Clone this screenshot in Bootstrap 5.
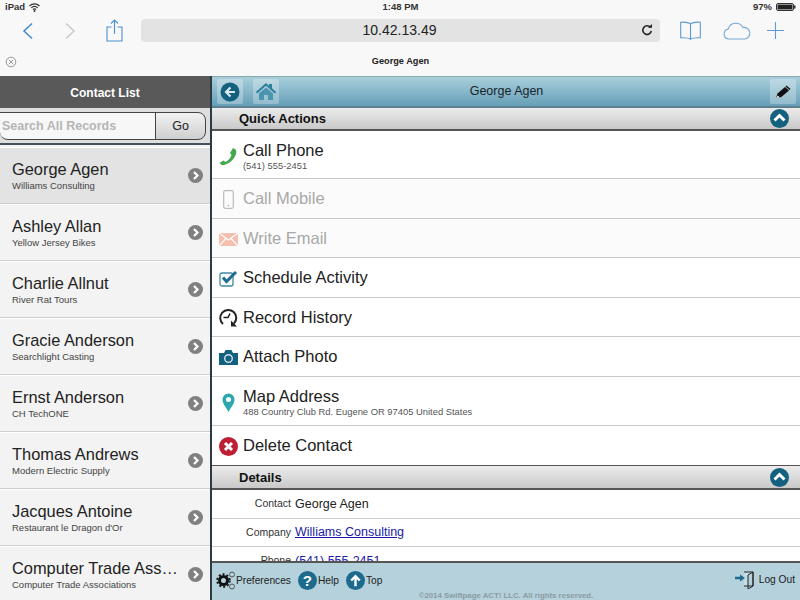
<!DOCTYPE html>
<html lang="en">
<head>
  <meta charset="UTF-8">
  <title>George Agen</title>
  <link href="https://cdn.jsdelivr.net/npm/bootstrap@5.3.0/dist/css/bootstrap.min.css" rel="stylesheet">
  <style>
    html, body { width: 800px; height: 600px; overflow: hidden; }
    body { font-family: "Liberation Sans", Arial, sans-serif; color: #222; background: #fff; }
    .chrome { height: 76px; background: #f8f8f8; }
    .status-bar { height: 14px; font-size: 9.5px; font-weight: 700; color: #333; padding: 0 4px 0 5px; }
    .status-side { width: 200px; }
    .tool-bar { height: 32px; padding-left: 7px; }
    .tool-btn { width: 42px; }
    .share-btn { width: 44px; padding-left: 2px; }
    .url-box { width: 519px; height: 23px; margin-left: 6px; background: #e3e3e3; border-radius: 4px; font-size: 14px; color: #222; padding-right: 7px; }
    .url-text { flex: 1; text-align: center; padding-left: 17px; }
    .book-btn { width: 60px; }
    .cloud-btn { width: 31px; padding-left: 2px; }
    .plus-btn { width: 49px; }
    .tab-bar { height: 30px; font-size: 9.2px; font-weight: 700; color: #222; padding: 2px 0 0 5px; }
    .tab-title { flex: 1; text-align: center; padding-right: 16px; }
    .main-area { height: 524px; }
    .left-pane { width: 212px; background: #f3f3f3; border-right: 2px solid #2c3a44; }
    .list-head { height: 32px; background: #595959; color: #fff; font-size: 12px; font-weight: 700; padding-top: 1px; }
    .search-row { height: 37px; background: #dedede; border-bottom: 2px solid #47525a; padding: 4px 4px 4px 0; }
    .search-box { flex: 1; height: 28px; background: #f7f7f7; border: 1px solid #444; border-left: 0; border-radius: 0 0 0 8px; color: #b5b5b5; font-size: 12.5px; font-weight: 700; padding-left: 2px; }
    .go-btn { width: 51px; height: 28px; border: 1px solid #444; border-radius: 0 8px 8px 0; margin-left: -1px; background: linear-gradient(#f2f2f2, #cfcfcf); font-size: 12.5px; color: #222; }
    .contact-list { padding-top: 2px; }
    .contact-row { height: 57px; padding: 0 7px 0 12px; border-top: 1px solid #fff; border-bottom: 1px solid #cfcfcf; }
    .contact-row.active-row { background: #e3e3e3; }
    .contact-name { font-size: 16.4px; line-height: 20px; color: #222; white-space: nowrap; }
    .contact-org { font-size: 9.5px; line-height: 13px; color: #444; }
    .right-pane { flex: 1; min-width: 0; }
    .detail-head { height: 32px; background: linear-gradient(#a9cfdb, #669fb8); border-top: 1px solid #8aa; border-bottom: 2px solid #5e7f8e; padding: 0 4px 0 5px; font-size: 12.5px; color: #17232b; }
    .head-btn { width: 26px; height: 25px; background: rgba(255,255,255,.28); border-radius: 2px; }
    .home-btn { margin-left: 10px; }
    .head-title { flex: 1; text-align: center; padding-right: 36px; }
    .scroll-area { flex: 1; min-height: 0; overflow: hidden; }
    .section-bar { background: linear-gradient(#ececec, #c9c9c9); font-size: 13px; font-weight: 700; color: #111; padding: 0 11px 0 27px; border-bottom: 2px solid #555; }
    .section-quick { height: 23px; }
    .section-details { height: 25px; border-top: 1px solid #555; padding-top: 1px; }
    .action-row { padding: 1px 0 0 7px; border-bottom: 1px solid #c8c8c8; font-size: 16.5px; line-height: 19px; color: #222; height: 39.5px; }
    .action-row.tall { height: 48px; padding-top: 2px; }
    .action-row.map-row { height: 49px; }
    .action-row.off { color: #a8a8a8; background: #fbfbfb; }
    .action-row.last { border-bottom: 0; }
    .action-ico { width: 19px; margin-right: 5px; flex: none; }
    .action-sub { font-size: 9.4px; line-height: 11px; color: #555; }
    .info-row { height: 28.5px; padding-top: 1px; border-bottom: 1px solid #cfcfcf; }
    .info-label { width: 79px; text-align: right; font-size: 10.5px; color: #333; margin-right: 4px; }
    .info-value { font-size: 12.5px; color: #222; }
    .info-value a { color: #1a1aa6; }
    .page-foot { height: 39px; background: #b4d1dc; border-top: 2px solid #555; padding: 0 5px 0 4px; font-size: 10.2px; color: #222; position: relative; flex: none; }
    .foot-circle { margin-left: 7px; }
    .foot-near { margin-left: 1px; }
    .copy-line { position: absolute; left: 0; right: 0; bottom: 0; line-height: 8px; text-align: center; font-size: 7.8px; font-weight: 700; color: #8b9ba2; }
  </style>
</head>
<body>
  <div class="chrome">
    <div class="status-bar d-flex align-items-center justify-content-between">
      <div class="status-side d-flex align-items-center gap-1">iPad
        <svg width="11" height="9" viewBox="0 0 11 9"><path d="M.5 3a7 7 0 0 1 10 0M2.300 4.800a4.500 4.500 0 0 1 6.400 0M4 6.500a2 2 0 0 1 3 0" fill="none" stroke="#333" stroke-width="1.200"/><circle cx="5.500" cy="8" r="1" fill="#333"/></svg>
      </div>
      <div>1:48 PM</div>
      <div class="status-side d-flex align-items-center justify-content-end gap-1">97%
        <svg width="20" height="8" viewBox="0 0 20 8"><rect x=".5" y=".5" width="17" height="7" rx="1.500" fill="#fff" stroke="#333"/><rect x="1.500" y="1.500" width="15" height="5" fill="#222"/><rect x="18" y="2.500" width="1.500" height="3" fill="#333"/></svg>
      </div>
    </div>
    <div class="tool-bar d-flex align-items-center">
      <div class="tool-btn text-center">
        <svg width="12" height="18" viewBox="0 0 12 18"><path d="M10 1.500 2 9l8 7.500" fill="none" stroke="#3b8ad0" stroke-width="1.500"/></svg>
      </div>
      <div class="tool-btn text-center">
        <svg width="12" height="18" viewBox="0 0 12 18"><path d="M2 1.500 10 9l-8 7.500" fill="none" stroke="#c9c9c9" stroke-width="1.500"/></svg>
      </div>
      <div class="share-btn text-center">
        <svg width="17" height="23" viewBox="0 0 17 23"><path d="M5.500 8H1v14h15V8h-4.500M8.500 15V1M5 4.500l3.500-3.500 3.500 3.500" fill="none" stroke="#4a90cf" stroke-width="1.100"/></svg>
      </div>
      <div class="url-box d-flex align-items-center">
        <div class="url-text">10.42.13.49</div>
        <svg width="12" height="12" viewBox="0 0 12 12"><path d="M9.500 3.500A4.300 4.300 0 1 0 10.300 7" fill="none" stroke="#222" stroke-width="1.600"/><path d="M7 3.800h4V0z" fill="#222"/></svg>
      </div>
      <div class="book-btn text-center">
        <svg width="21" height="19" viewBox="0 0 21 19"><path d="M10.500 3C9 1.500 5 1 .7 1.200v15.600c4.300-.2 8.300.2 9.800 1.500 1.500-1.300 5.500-1.700 9.800-1.500V1.200C16 1 12 1.500 10.500 3zm0 0v15" fill="none" stroke="#5d9ad3" stroke-width="1.100"/></svg>
      </div>
      <div class="cloud-btn text-center">
        <svg width="28" height="18" viewBox="0 0 28 18"><path d="M6 17a5 5 0 0 1-.8-9.900A8 8 0 0 1 20 5.500a5.800 5.800 0 0 1 2 11.500z" fill="none" stroke="#7ba9d4" stroke-width="1.100"/></svg>
      </div>
      <div class="plus-btn text-center">
        <svg width="17" height="17" viewBox="0 0 17 17"><path d="M8.500 0v17M0 8.500h17" stroke="#5d9ad3" stroke-width="1.100"/></svg>
      </div>
    </div>
    <div class="tab-bar d-flex align-items-center">
      <svg width="12" height="12" viewBox="0 0 12 12"><circle cx="6" cy="6" r="4.800" fill="none" stroke="#999"/><path d="M3.800 3.800l4.400 4.400M8.200 3.800 3.800 8.200" stroke="#999"/></svg>
      <div class="tab-title">George Agen</div>
    </div>
  </div>

  <div class="main-area d-flex">
    <div class="left-pane d-flex flex-column overflow-hidden flex-shrink-0">
      <div class="list-head d-flex align-items-center justify-content-center flex-shrink-0">Contact List</div>
      <div class="search-row d-flex flex-shrink-0">
        <div class="search-box d-flex align-items-center">Search All Records</div>
        <div class="go-btn d-flex align-items-center justify-content-center">Go</div>
      </div>
      <div id="contacts" class="contact-list"></div>
    </div>

    <div class="right-pane d-flex flex-column">
      <div class="detail-head d-flex align-items-center flex-shrink-0">
        <div class="head-btn d-flex align-items-center justify-content-center">
          <svg width="20" height="20" viewBox="0 0 20 20"><circle cx="10" cy="10" r="9.500" fill="#14607f"/><path d="M15 10H7M10.500 5.500 6 10l4.500 4.500" fill="none" stroke="#d9e8ee" stroke-width="2.200"/></svg>
        </div>
        <div class="head-btn home-btn d-flex align-items-center justify-content-center">
          <svg width="22" height="19" viewBox="0 0 22 19"><path d="M11 1 .8 10l1.400 1.400L11 3.800l8.800 7.600 1.400-1.400L17 6.300V2h-3v1.700z" fill="#2f7f9f"/><path d="M4 11.500 11 5.500l7 6V18h-5v-5H9v5H4z" fill="#4b94b0"/></svg>
        </div>
        <div class="head-title">George Agen</div>
        <div class="head-btn d-flex align-items-center justify-content-center">
          <svg width="16" height="14" viewBox="0 0 16 14"><path d="M1 13l1.500-4.500L10 2l4 3.500L6.300 12z" fill="#111"/><path d="M2.800 10.500 4.500 12.300 1 13z" fill="#fff"/><path d="M11 1l4 3.500" stroke="#111" stroke-width="1.500"/></svg>
        </div>
      </div>

      <div class="scroll-area">
        <div class="section-bar section-quick d-flex align-items-center justify-content-between">Quick Actions
          <svg width="19" height="19" viewBox="0 0 19 19"><circle cx="9.500" cy="9.500" r="9.500" fill="#14607f"/><path d="M4.500 11.500l5-5 5 5" fill="none" stroke="#fff" stroke-width="3"/></svg>
        </div>

        <div class="action-row tall d-flex align-items-center">
          <div class="action-ico text-center">
            <svg width="19" height="19" viewBox="0 0 19 19"><path d="M14 1c3 1 4 3 3 6-1.500 5-6 9.500-12 11-2 .3-3.500-.5-4.500-2l4-2.500 2 1.500c3-1.500 5-4 6-7l-1.500-2z" fill="#43a74d"/></svg>
          </div>
          <div>Call Phone<div class="action-sub">(541) 555-2451</div></div>
        </div>
        <div class="action-row off d-flex align-items-center">
          <div class="action-ico text-center">
            <svg width="11" height="19" viewBox="0 0 11 19"><rect x=".7" y=".7" width="9.600" height="17.600" rx="1.500" fill="none" stroke="#bbb" stroke-width="1.200"/><circle cx="5.500" cy="15.500" r=".8" fill="#aaa"/></svg>
          </div>
          <div>Call Mobile</div>
        </div>
        <div class="action-row off d-flex align-items-center">
          <div class="action-ico text-center">
            <svg width="19" height="13" viewBox="0 0 19 13"><rect width="19" height="13" fill="#f4bfae"/><path d="M0 0l9.500 7L19 0M0 13l7-7.500M19 13l-7-7.500" fill="none" stroke="#fff" stroke-width="1.100"/></svg>
          </div>
          <div>Write Email</div>
        </div>
        <div class="action-row d-flex align-items-center">
          <div class="action-ico text-center">
            <svg width="19" height="17" viewBox="0 0 19 17"><rect x="1" y="3" width="13" height="13" rx="2" fill="none" stroke="#3f8aa6" stroke-width="1.300"/><path d="M4 7.500l3.500 4L17 2" fill="none" stroke="#1f6c90" stroke-width="3"/></svg>
          </div>
          <div>Schedule Activity</div>
        </div>
        <div class="action-row d-flex align-items-center">
          <div class="action-ico text-center">
            <svg width="19" height="19" viewBox="0 0 19 19"><path d="M4 16A8 8 0 1 1 15 15.500" fill="none" stroke="#222" stroke-width="2"/><path d="M11 5.500 9 9.500H4.500" fill="none" stroke="#222" stroke-width="1.600"/><path d="M12 12.500v6h6z" fill="#222"/></svg>
          </div>
          <div>Record History</div>
        </div>
        <div class="action-row d-flex align-items-center">
          <div class="action-ico text-center">
            <svg width="19" height="15" viewBox="0 0 19 15"><path d="M0 3h5l1.500-3h6L14 3h5v12H0z" fill="#14607f"/><circle cx="9.500" cy="8.500" r="3.800" fill="#14607f" stroke="#cfe3ec" stroke-width="1.400"/></svg>
          </div>
          <div>Attach Photo</div>
        </div>
        <div class="action-row tall map-row d-flex align-items-center">
          <div class="action-ico text-center">
            <svg width="13" height="19" viewBox="0 0 13 19"><path d="M6.500 19C4 14 .5 10.500.5 6.500a6 6 0 0 1 12 0c0 4-3.500 7.500-6 12.500z" fill="#2ba8ad"/><circle cx="6.500" cy="6.500" r="2.500" fill="#fff"/></svg>
          </div>
          <div>Map Address<div class="action-sub">488 Country Club Rd. Eugene OR 97405 United States</div></div>
        </div>
        <div class="action-row last d-flex align-items-center">
          <div class="action-ico text-center">
            <svg width="19" height="19" viewBox="0 0 19 19"><circle cx="9.500" cy="9.500" r="9.500" fill="#bd1f35"/><path d="M6 6l7 7M13 6l-7 7" stroke="#fff" stroke-width="3"/></svg>
          </div>
          <div>Delete Contact</div>
        </div>

        <div class="section-bar section-details d-flex align-items-center justify-content-between">Details
          <svg width="19" height="19" viewBox="0 0 19 19"><circle cx="9.500" cy="9.500" r="9.500" fill="#14607f"/><path d="M4.500 11.500l5-5 5 5" fill="none" stroke="#fff" stroke-width="3"/></svg>
        </div>
        <div class="info-row d-flex align-items-center"><div class="info-label">Contact</div><div class="info-value">George Agen</div></div>
        <div class="info-row d-flex align-items-center"><div class="info-label">Company</div><div class="info-value"><a href="#">Williams Consulting</a></div></div>
        <div class="info-row d-flex align-items-center"><div class="info-label">Phone</div><div class="info-value"><a href="#">(541) 555-2451</a></div></div>
      </div>

      <div class="page-foot d-flex align-items-start pt-1">
        <div class="d-flex align-items-center flex-grow-1 mt-1">
          <svg width="20" height="19" viewBox="0 0 20 19"><circle cx="7.500" cy="9.500" r="4" fill="none" stroke="#111" stroke-width="3"/><circle cx="7.500" cy="9.500" r="6.300" fill="none" stroke="#111" stroke-width="1.800" stroke-dasharray="2 2"/><circle cx="16" cy="3.500" r="2.500" fill="none" stroke="#555"/><circle cx="16" cy="15.500" r="2.500" fill="none" stroke="#555"/></svg>
          <span>Preferences</span>
          <svg class="foot-circle" width="19" height="19" viewBox="0 0 20 20"><circle cx="10" cy="10" r="10" fill="#1d6a8d"/><text x="10" y="16" text-anchor="middle" font-family="Liberation Sans" font-size="16" font-weight="700" fill="#fff">?</text></svg>
          <span class="foot-near">Help</span>
          <svg class="foot-circle" width="19" height="19" viewBox="0 0 20 20"><circle cx="10" cy="10" r="10" fill="#1d6a8d"/><path d="M10 16V6M5.500 10l4.500-4.500 4.500 4.500" fill="none" stroke="#fff" stroke-width="2.500"/></svg>
          <span class="foot-near">Top</span>
        </div>
        <div class="d-flex align-items-center mt-1">
          <svg width="20" height="18" viewBox="0 0 20 18"><path d="M9 1h9v14H9M18 1l-5 3v14l5-3z" fill="#c6dde6" stroke="#222"/><path d="M0 7h6" stroke="#1d6a8d" stroke-width="2.500"/><path d="M5 3.500 10 7l-5 3.500z" fill="#1d6a8d"/></svg>
          <span class="ms-1">Log Out</span>
        </div>
        <div class="copy-line">©2014 Swiftpage ACT! LLC. All rights reserved.</div>
      </div>
    </div>
  </div>

  <script src="https://cdn.jsdelivr.net/npm/bootstrap@5.3.0/dist/js/bootstrap.bundle.min.js"></script>
  <script>
    const people = [
      ['George Agen', 'Williams Consulting'],
      ['Ashley Allan', 'Yellow Jersey Bikes'],
      ['Charlie Allnut', 'River Rat Tours'],
      ['Gracie Anderson', 'Searchlight Casting'],
      ['Ernst Anderson', 'CH TechONE'],
      ['Thomas Andrews', 'Modern Electric Supply'],
      ['Jacques Antoine', "Restaurant le Dragon d'Or"],
      ['Computer Trade Ass…', 'Computer Trade Associations']
    ];
    const box = document.getElementById('contacts');
    people.forEach((p, i) => {
      const row = document.createElement('div');
      row.className = 'contact-row d-flex align-items-center justify-content-between' + (i === 0 ? ' active-row' : '');
      row.innerHTML = `<div><div class="contact-name">${p[0]}</div><div class="contact-org">${p[1]}</div></div>
        <svg class="flex-shrink-0" width="15" height="15" viewBox="0 0 15 15"><circle cx="7.500" cy="7.500" r="7.500" fill="#808080"/><path d="M6 4l3.500 3.500L6 11" fill="none" stroke="#fff" stroke-width="2.200"/></svg>`;
      box.appendChild(row);
    });
  </script>
</body>
</html>
